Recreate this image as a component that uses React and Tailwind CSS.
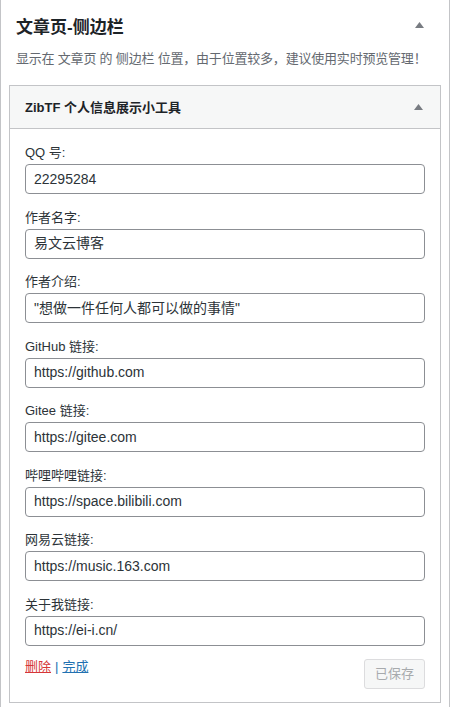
const fields = [
  { label: 'QQ 号:', value: '22295284' },
  { label: '作者名字:', value: '易文云博客' },
  { label: '作者介绍:', value: '"想做一件任何人都可以做的事情"' },
  { label: 'GitHub 链接:', value: 'https://github.com' },
  { label: 'Gitee 链接:', value: 'https://gitee.com' },
  { label: '哔哩哔哩链接:', value: 'https://space.bilibili.com' },
  { label: '网易云链接:', value: 'https://music.163.com' },
  { label: '关于我链接:', value: 'https://ei-i.cn/' },
]

function Arrow() {
  return (
    <svg width="9" height="6" viewBox="0 0 9 6" className="shrink-0">
      <polygon points="4.5,0 9,6 0,6" fill="#787c82" />
    </svg>
  )
}

export default function App() {
  return (
    <div className="w-[451px] min-h-[707px] bg-white font-['Liberation_Sans','Noto_Sans_CJK_SC',sans-serif]">
      <div className="w-[450px] min-h-[707px] border-x border-[#c3c4c7] bg-white">
        <div className="pl-[15px] pr-[25px] pt-4">
          <div className="flex items-center justify-between h-6">
            <h3 className="text-[17px] leading-6 font-bold text-[#1d2327]">文章页-侧边栏</h3>
            <span className="-mt-[6px]"><Arrow /></span>
          </div>
          <p className="mt-[9px] text-[13px] leading-5 text-[#646970] whitespace-nowrap tracking-[-0.2px]">
            显示在 文章页 的 侧边栏 位置，由于位置较多，建议使用实时预览管理！
          </p>
        </div>

        <div className="mx-2 mt-4 border border-[#c3c4c7] bg-white">
          <div className="h-[43px] flex items-center justify-between pl-[15px] pr-[17px] bg-[#f6f7f7] border-b border-[#c3c4c7]">
            <span className="text-[13px] font-bold text-[#1d2327] pt-px">ZibTF 个人信息展示小工具</span>
            <Arrow />
          </div>

          <div className="px-[15px] pt-[14px] pb-[13px]">
            {fields.map((f) => (
              <div key={f.label} className="mb-[13.57px]">
                <label className="block text-[13px] leading-5 text-[#2c3338] mb-px">{f.label}</label>
                <div className="h-[30px] flex items-center px-2 border border-[#8c8f94] rounded bg-white text-[14px] text-[#2c3338]">
                  {f.value}
                </div>
              </div>
            ))}

            <div className="flex items-start justify-between -mt-[1px]">
              <div className="text-[13px] leading-4">
                <a className="text-[#d63638] underline">删除</a>
                <span className="text-[#2271b1] mx-[4px]">|</span>
                <a className="text-[#2271b1] underline">完成</a>
              </div>
              <button disabled className="h-[30px] px-[10px] text-[13px] border border-[#dcdcde] rounded-[3px] bg-[#f6f7f7] text-[#a7aaad]">
                已保存
              </button>
            </div>
          </div>
        </div>
      </div>
    </div>
  )
}
